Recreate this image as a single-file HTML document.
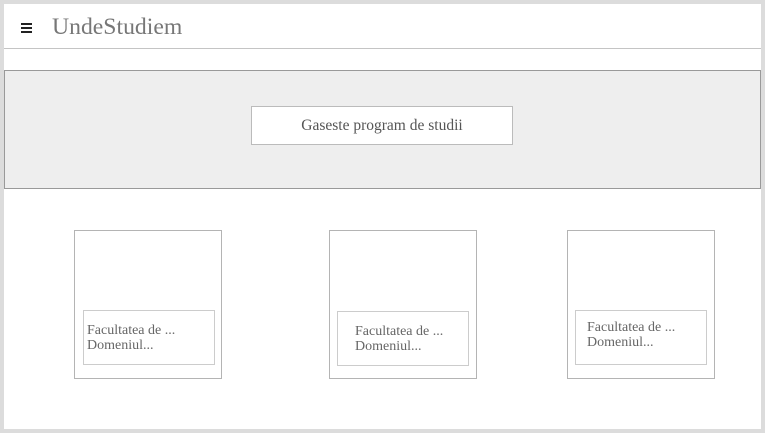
<!DOCTYPE html>
<html><head><style>
body{margin:0;width:765px;height:433px;background:#dcdcdc;position:relative;overflow:hidden;font-family:"Liberation Serif",serif}
.a{position:absolute;box-sizing:border-box}
.card{border:1px solid #b4b4b4;background:#fff}
.in{border:1px solid #ccc;background:#fff;color:#666;font-size:14px;line-height:15px;padding-left:3px}
</style></head><body>
<div class="a" style="left:4px;top:4px;width:757px;height:425px;background:#fff"></div>
<div class="a" style="left:4px;top:48px;width:757px;height:1px;background:#c4c4c4"></div>
<div class="a" style="left:21px;top:23px;width:11px;height:1.5px;background:#222"></div>
<div class="a" style="left:21px;top:27px;width:11px;height:1.5px;background:#222"></div>
<div class="a" style="left:21px;top:31px;width:11px;height:1.5px;background:#222"></div>
<div class="a" style="left:52px;top:13px;font-size:23.7px;color:#777;line-height:28px">UndeStudiem</div>
<div class="a" style="left:4px;top:70px;width:757px;height:119px;background:#eee;border:1px solid #999"></div>
<div class="a" style="left:251px;top:106px;width:262px;height:39px;background:#fff;border:1px solid #bbb;color:#555;font-size:15.5px;text-align:center;line-height:37px">Gaseste program de studii</div>
<div class="a card" style="left:74px;top:230px;width:148px;height:149px"></div>
<div class="a in" style="left:83px;top:310px;width:132px;height:55px;padding-top:12px">Facultatea de ...<br>Domeniul...</div>
<div class="a card" style="left:329px;top:230px;width:148px;height:149px"></div>
<div class="a in" style="left:337px;top:311px;width:132px;height:55px;padding-top:12px;padding-left:17px">Facultatea de ...<br>Domeniul...</div>
<div class="a card" style="left:567px;top:230px;width:148px;height:149px"></div>
<div class="a in" style="left:575px;top:310px;width:132px;height:55px;padding-top:9px;padding-left:11px">Facultatea de ...<br>Domeniul...</div>
</body></html>
